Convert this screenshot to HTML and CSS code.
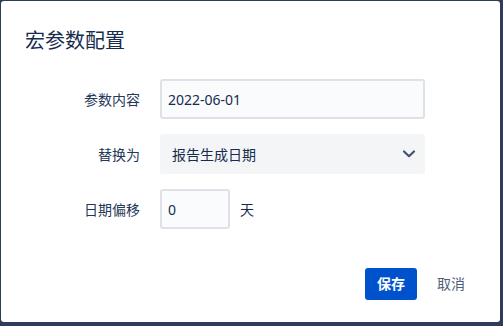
FILE: index.html
```html
<!DOCTYPE html>
<html lang="zh">
<head>
<meta charset="utf-8">
<title>宏参数配置</title>
<link rel="stylesheet" href="styles.css">
</head>
<body>
<div class="modal">
  <h1 class="title">宏参数配置</h1>
  <div class="form">
    <label class="label">参数内容</label>
    <div class="field"><div class="input">2022-06-01</div></div>
    <label class="label">替换为</label>
    <div class="field">
      <div class="select">
        <span>报告生成日期</span>
        <svg class="chev" width="14" height="10" viewBox="0 0 14 10"><path d="M2 2.5 L7 7.2 L12 2.5" fill="none" stroke="#42526e" stroke-width="2.2" stroke-linecap="round" stroke-linejoin="round"/></svg>
      </div>
    </div>
    <label class="label">日期偏移</label>
    <div class="field">
      <div class="input small">0</div>
      <span class="unit">天</span>
    </div>
  </div>
  <div class="footer">
    <button class="btn primary">保存</button>
    <button class="btn subtle">取消</button>
  </div>
</div>
</body>
</html>
```
FILE: styles.css
```css
html, body {
  margin: 0;
  height: 100%;
}
body {
  background: #2d3c59;
  padding: 1px 3px 4px 1px;
  box-sizing: border-box;
  font-family: "Noto Sans", "Noto Sans CJK SC", sans-serif;
  color: #172b4d;
}
.modal {
  background: #ffffff;
  border-radius: 3px;
  height: 321px;
  box-sizing: border-box;
  padding: 28px 23px 22px 24px;
  display: flex;
  flex-direction: column;
}
.title {
  margin: 0;
  font-size: 20px;
  line-height: 24px;
  font-weight: 400;
  color: #172b4d;
}
.form {
  margin-top: 26px;
  display: grid;
  grid-template-columns: 115px 265px;
  column-gap: 20px;
  row-gap: 15px;
  grid-auto-rows: 40px;
}
.label {
  display: flex;
  align-items: center;
  justify-content: flex-end;
  font-size: 14px;
  color: #253858;
}
.field {
  display: flex;
  align-items: center;
}
.input {
  width: 265px;
  height: 40px;
  box-sizing: border-box;
  border: 2px solid #dfe1e6;
  border-radius: 3px;
  background: #fafbfc;
  padding: 0 6px;
  display: flex;
  align-items: center;
  font-size: 14px;
  color: #172b4d;
}
.input.small {
  width: 70px;
}
.unit {
  margin-left: 10px;
  font-size: 14px;
  color: #172b4d;
}
.select {
  width: 265px;
  height: 40px;
  box-sizing: border-box;
  background: #f4f5f7;
  border-radius: 3px;
  padding: 0 9px 0 12px;
  display: flex;
  align-items: center;
  justify-content: space-between;
  font-size: 14px;
  color: #172b4d;
}
.footer {
  margin-top: auto;
  display: flex;
  justify-content: flex-end;
  gap: 8px;
}
.btn {
  height: 32px;
  border: none;
  border-radius: 3px;
  padding: 0 12px;
  font-family: "Noto Sans", "Noto Sans CJK SC", sans-serif;
  font-size: 14px;
  line-height: 32px;
  cursor: pointer;
}
.primary {
  background: #0052cc;
  color: #ffffff;
  font-weight: 700;
}
.subtle {
  background: transparent;
  color: #505f79;
}
```
